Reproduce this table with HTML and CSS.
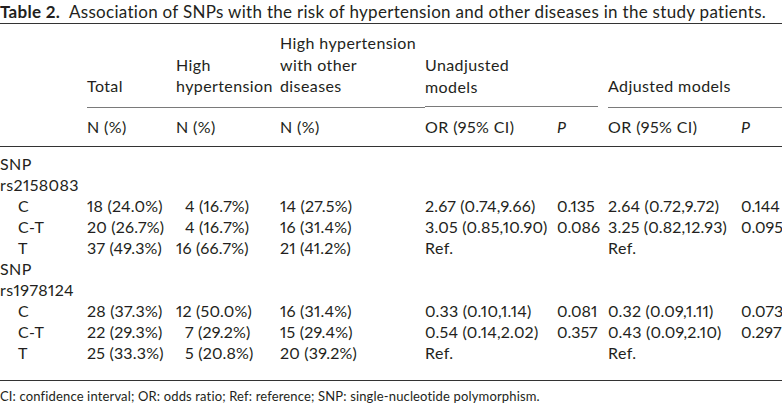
FILE: index.html
```html
<!DOCTYPE html>
<html>
<head>
<meta charset="utf-8">
<link rel="stylesheet" href="styles.css">
</head>
<body>
<div class="caption"><b>Table 2.</b>&nbsp; Association of SNPs with the risk of hypertension and other diseases in the study patients.</div>
<table class="t">
<colgroup>
<col class="c1"><col class="c2"><col class="c3"><col class="c4"><col class="c5"><col class="c6"><col class="c7"><col class="c8">
</colgroup>
<thead>
<tr class="h1">
<th class="blank"></th>
<th class="ru">Total</th>
<th class="ru">High<br>hypertension</th>
<th class="ru">High hypertension<br>with other<br>diseases</th>
<th class="ru-short" colspan="2">Unadjusted<br>models</th>
<th class="ru" colspan="2">Adjusted models</th>
</tr>
<tr class="h2">
<th></th>
<th>N (%)</th>
<th>N (%)</th>
<th>N (%)</th>
<th>OR (95% CI)</th>
<th><i>P</i></th>
<th>OR (95% CI)</th>
<th><i>P</i></th>
</tr>
</thead>
<tbody>
<tr class="first"><td>SNP</td><td></td><td></td><td></td><td></td><td></td><td></td><td></td></tr>
<tr><td>rs2158083</td><td></td><td></td><td></td><td></td><td></td><td></td><td></td></tr>
<tr><td class="ind">C</td><td class="n">18 (24.0%)</td><td class="n pad">4 (16.7%)</td><td class="n">14 (27.5%)</td><td class="n">2.67 (0.74,9.66)</td><td class="p">0.135</td><td class="n">2.64 (0.72,9.72)</td><td class="p">0.144</td></tr>
<tr><td class="ind">C-T</td><td class="n">20 (26.7%)</td><td class="n pad">4 (16.7%)</td><td class="n">16 (31.4%)</td><td class="n">3.05 (0.85,10.90)</td><td class="p">0.086</td><td class="n">3.25 (0.82,12.93)</td><td class="p">0.095</td></tr>
<tr><td class="ind">T</td><td class="n">37 (49.3%)</td><td class="n">16 (66.7%)</td><td class="n">21 (41.2%)</td><td>Ref.</td><td></td><td>Ref.</td><td></td></tr>
<tr><td>SNP</td><td></td><td></td><td></td><td></td><td></td><td></td><td></td></tr>
<tr><td>rs1978124</td><td></td><td></td><td></td><td></td><td></td><td></td><td></td></tr>
<tr><td class="ind">C</td><td class="n">28 (37.3%)</td><td class="n">12 (50.0%)</td><td class="n">16 (31.4%)</td><td class="n">0.33 (0.10,1.14)</td><td class="p">0.081</td><td class="n">0.32 (0.09,1.11)</td><td class="p">0.073</td></tr>
<tr><td class="ind">C-T</td><td class="n">22 (29.3%)</td><td class="n pad">7 (29.2%)</td><td class="n">15 (29.4%)</td><td class="n">0.54 (0.14,2.02)</td><td class="p">0.357</td><td class="n">0.43 (0.09,2.10)</td><td class="p">0.297</td></tr>
<tr class="last"><td class="ind">T</td><td class="n">25 (33.3%)</td><td class="n pad">5 (20.8%)</td><td class="n">20 (39.2%)</td><td>Ref.</td><td></td><td>Ref.</td><td></td></tr>
</tbody>
</table>
<div class="foot">CI: confidence interval; OR: odds ratio; Ref: reference; SNP: single-nucleotide polymorphism.</div>
</body>
</html>
```

FILE: styles.css
```css
html, body {
  margin: 0;
  padding: 0;
  background: #ffffff;
}
body {
  width: 782px;
  font-family: Lato, "Open Sans", sans-serif;
  color: #231f20;
  font-size: 16px;
  letter-spacing: 0.4px;
  font-variant-numeric: proportional-nums;
}
.caption {
  height: 23px;
  line-height: 23px;
  font-size: 17px;
  letter-spacing: 0.3px;
  white-space: nowrap;
  border-bottom: 1px solid #333;
}
.caption b {
  font-weight: 700;
}
.t {
  width: 782px;
  border-collapse: collapse;
  table-layout: fixed;
  font-size: 16px;
  line-height: 21px;
}
.c1 { width: 87px; }
.c2 { width: 89px; }
.c3 { width: 104px; }
.c4 { width: 145px; }
.c5 { width: 132px; }
.c6 { width: 51px; }
.c7 { width: 133px; }
.c8 { width: 41px; }
th, td {
  padding: 0;
  text-align: left;
  font-weight: 400;
  white-space: nowrap;
  vertical-align: bottom;
}
td {
  height: 21px;
}
td.n {
  letter-spacing: 0.2px;
}
td.pad {
  padding-left: 9px;
}
td.p {
  letter-spacing: 0;
}
.h1 th {
  padding-top: 8px;
  padding-bottom: 10px;
  line-height: 21.5px;
}
.h1 th.ru {
  border-bottom: 1px solid #7a7a7a;
}
.h1 th.ru-short {
  background: linear-gradient(#7a7a7a, #7a7a7a) no-repeat left bottom / calc(100% - 10px) 1px;
}
.h2 th {
  padding-top: 8px;
  padding-bottom: 9px;
  border-bottom: 1px solid #333;
}
.h2 th i {
  font-style: italic;
}
tr.first td {
  padding-top: 6px;
}
tr.last td {
  padding-bottom: 17px;
  border-bottom: 1px solid #333;
}
td.ind {
  padding-left: 18px;
}
.foot {
  padding-top: 6px;
  font-size: 13px;
  letter-spacing: 0.15px;
  line-height: 18px;
  white-space: nowrap;
}
```
